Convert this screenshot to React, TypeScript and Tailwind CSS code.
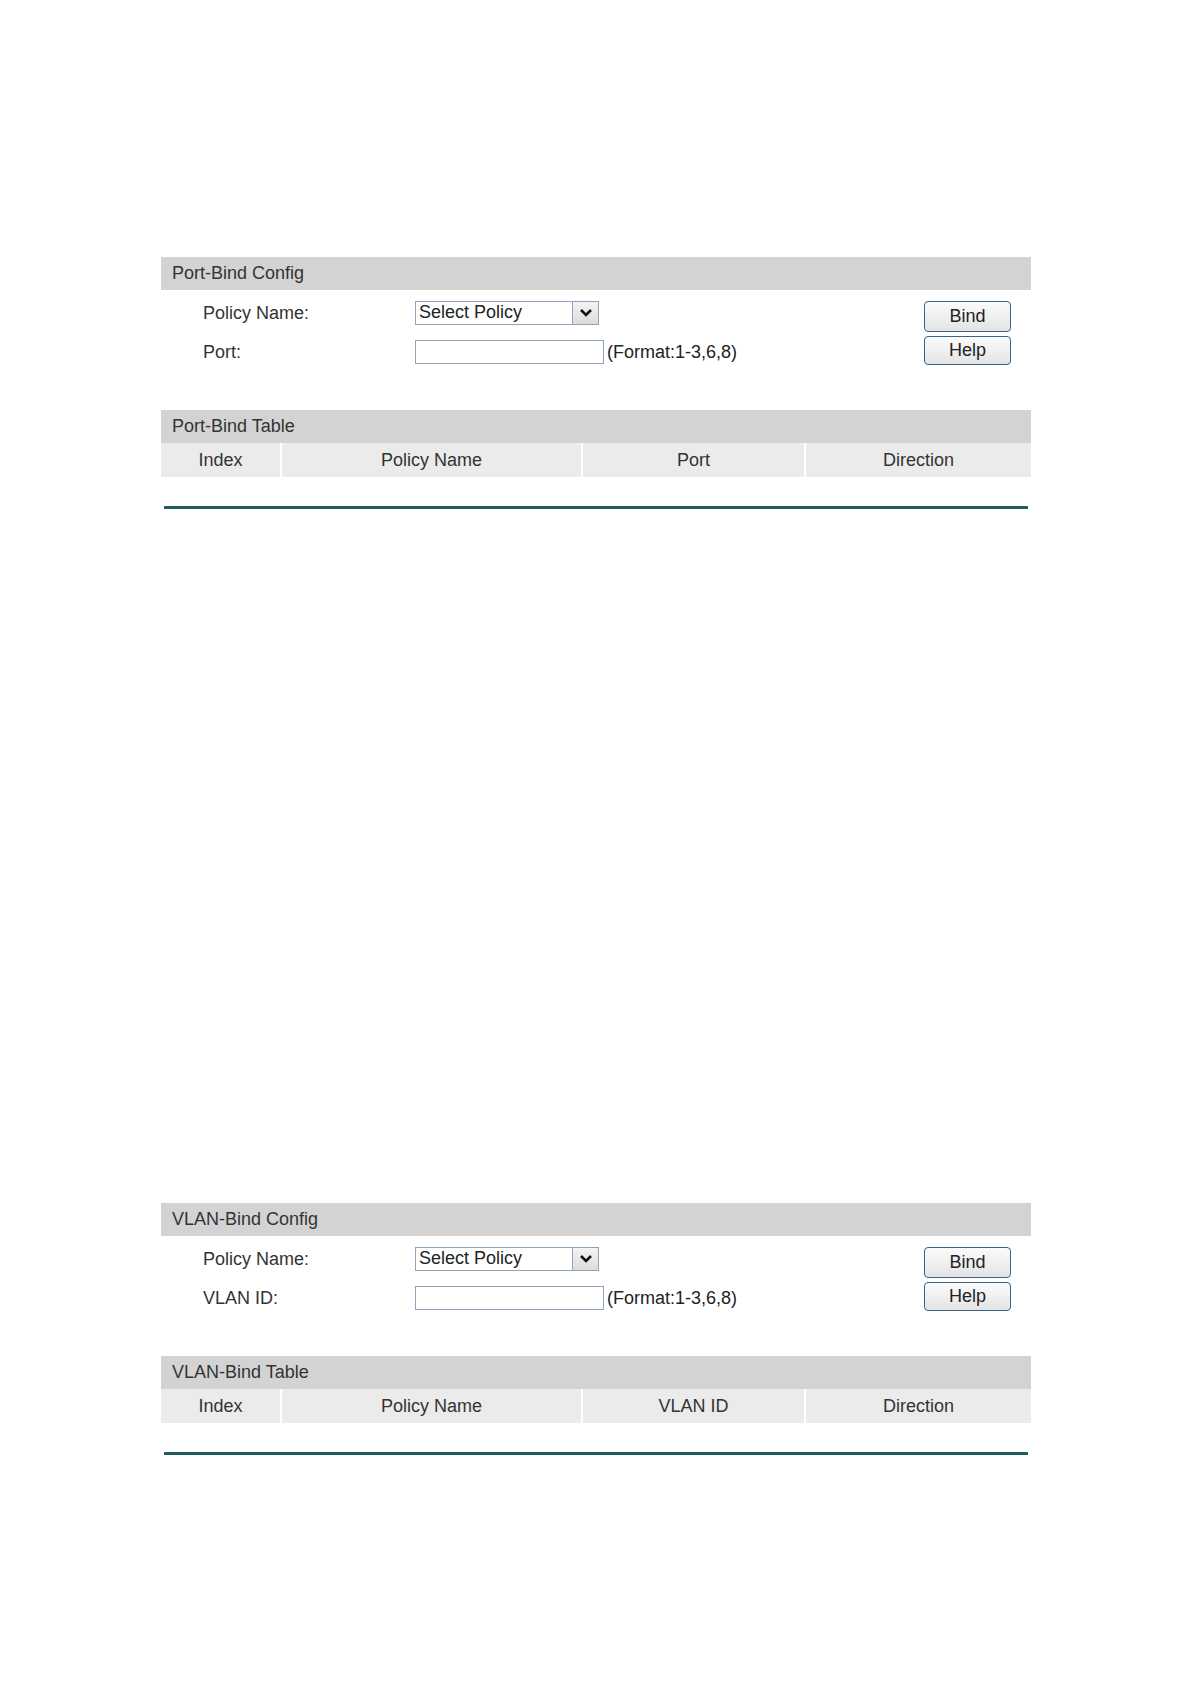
import React from 'react';

const font = { fontFamily: '"Liberation Sans", Arial, sans-serif' };

function Chevron() {
  return (
    <svg width="14" height="10" viewBox="0 0 14 10">
      <path d="M2 2 L7 7 L12 2" fill="none" stroke="#111" strokeWidth="2.6" />
    </svg>
  );
}

function SelectBox() {
  return (
    <div className="flex h-[24px] w-[184px] items-stretch border border-[#8ea4bd] bg-white">
      <span className="flex-1 pl-[3px] leading-[21px] text-[#222]">Select Policy</span>
      <span className="flex w-[26px] items-center justify-center border-l border-[#8ea4bd] bg-gradient-to-b from-[#f4f4f4] to-[#dcdcdc]">
        <Chevron />
      </span>
    </div>
  );
}

function Btn({ label, tall }: { label: string; tall?: boolean }) {
  return (
    <button
      className={
        'w-[87px] rounded-[4px] border border-[#3c6384] bg-gradient-to-b from-[#fbfbfb] to-[#e4e4e4] text-[18px] text-[#222] ' +
        (tall ? 'h-[31px]' : 'h-[29px]')
      }
    >
      {label}
    </button>
  );
}

function Section({ title, field, col }: { title: string; field: string; col: string }) {
  return (
    <div className="w-[870px]">
      <div className="flex h-[33px] items-center bg-[#d3d3d3] pl-[11px] text-[#333]">{title} Config</div>
      <div className="flex h-[120px] justify-between">
        <div className="flex flex-col gap-[15px] pl-[42px] pt-[11px]">
          <div className="flex h-[24px] items-center leading-[24px]">
            <span className="w-[212px] text-[#333]">Policy Name:</span>
            <SelectBox />
          </div>
          <div className="flex h-[24px] items-center leading-[24px]">
            <span className="w-[212px] text-[#333]">{field}:</span>
            <div className="h-[24px] w-[189px] border border-[#8ea4bd] bg-white" />
            <span className="ml-[3px] text-[#222]">(Format:1-3,6,8)</span>
          </div>
        </div>
        <div className="flex flex-col gap-[4px] pr-[20px] pt-[11px]">
          <Btn label="Bind" tall />
          <Btn label="Help" />
        </div>
      </div>
      <div className="flex h-[33px] items-center bg-[#d3d3d3] pl-[11px] text-[#333]">{title} Table</div>
      <div className="flex h-[34px] bg-[#ebebeb] text-[#333]">
        <div className="flex w-[121px] items-center justify-center border-r-2 border-white">Index</div>
        <div className="flex w-[301px] items-center justify-center border-r-2 border-white">Policy Name</div>
        <div className="flex w-[223px] items-center justify-center border-r-2 border-white">{col}</div>
        <div className="flex flex-1 items-center justify-center">Direction</div>
      </div>
      <div className="mx-[3px] mt-[29px] h-[3px] bg-[#1d5c60]" />
    </div>
  );
}

export default function App() {
  return (
    <div className="min-h-[1684px] w-[1191px] bg-white text-[18px]" style={font}>
      <div className="pl-[161px] pt-[257px]">
        <Section title="Port-Bind" field="Port" col="Port" />
        <div className="h-[694px]" />
        <Section title="VLAN-Bind" field="VLAN ID" col="VLAN ID" />
      </div>
    </div>
  );
}
